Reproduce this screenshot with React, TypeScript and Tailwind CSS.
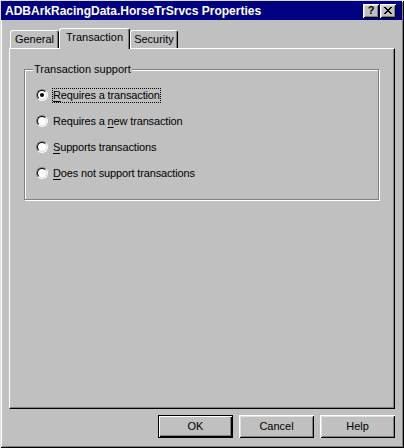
import React from "react";

const raised =
  "shadow-[inset_1px_1px_0_#ffffff,inset_-1px_-1px_0_#000000,inset_2px_2px_0_#dfdfdf,inset_-2px_-2px_0_#808080]";

function Radio({ checked }: { checked?: boolean }) {
  return (
    <div className="w-[12px] h-[12px] rounded-full border border-t-[#808080] border-l-[#808080] border-r-white border-b-white shrink-0">
      <div className="w-full h-full rounded-full border border-t-black border-l-black border-r-[#dfdfdf] border-b-[#dfdfdf] bg-white flex items-center justify-center">
        {checked && <div className="w-[4px] h-[4px] rounded-full bg-black" />}
      </div>
    </div>
  );
}

function Row({
  children,
  checked,
  focused,
}: {
  children: React.ReactNode;
  checked?: boolean;
  focused?: boolean;
}) {
  return (
    <div className="flex items-center h-[16px]">
      <Radio checked={checked} />
      <div
        className={
          "ml-[4px] h-[15px] leading-[13px] tracking-[-0.15px] border border-dotted " +
          (focused ? "border-black" : "border-transparent")
        }
      >
        {children}
      </div>
    </div>
  );
}

function U({ children }: { children: React.ReactNode }) {
  return <span className="underline underline-offset-[2px]">{children}</span>;
}

function Tab({ label, active, w }: { label: string; active?: boolean; w: string }) {
  return (
    <div
      className={
        "relative flex justify-center bg-[#c0c0c0] border-t border-l border-white border-r border-r-black rounded-t-[3px] shadow-[inset_-1px_0_0_#808080] " +
        w +
        (active ? " h-[21px] -mb-[1px] z-10 pt-[2px]" : " h-[18px] pt-[2px]")
      }
    >
      <span className="leading-[13px]">{label}</span>
    </div>
  );
}

function Btn({ label, def }: { label: string; def?: boolean }) {
  return (
    <div
      className={
        "w-[75px] h-[23px] flex items-center justify-center bg-[#c0c0c0] " +
        (def
          ? "border border-black shadow-[inset_1px_1px_0_#ffffff,inset_-1px_-1px_0_#000000,inset_-2px_-2px_0_#808080]"
          : raised)
      }
    >
      {label}
    </div>
  );
}

export default function App() {
  return (
    <div className="w-[404px] h-[448px] bg-[#c0c0c0] flex flex-col font-['Liberation_Sans',Arial,sans-serif] text-[11px] text-black shadow-[inset_1px_1px_0_#dfdfdf,inset_-1px_-1px_0_#000000,inset_2px_2px_0_#ffffff,inset_-2px_-2px_0_#808080] overflow-hidden">
      {/* Title bar */}
      <div className="mt-[1px] ml-[1px] mr-[2px] h-[19px] bg-[#000080] flex items-center pl-[4px] pr-[6px]">
        <span className="text-white font-bold text-[12px] flex-1 leading-none">
          ADBArkRacingData.HorseTrSrvcs Properties
        </span>
        <div className="flex">
          <div className={"w-[16px] h-[14px] bg-[#c0c0c0] flex items-center justify-center font-bold text-[11px] leading-none " + raised}>
            ?
          </div>
          <div className={"w-[16px] h-[14px] bg-[#c0c0c0] flex items-center justify-center ml-[1px] " + raised}>
            <svg width="8" height="7" viewBox="0 0 8 7" shapeRendering="crispEdges">
              <path
                d="M0 0h2v1h-2z M6 0h2v1h-2z M1 1h2v1h-2z M5 1h2v1h-2z M2 2h4v1h-4z M3 3h2v1h-2z M2 4h4v1h-4z M1 5h2v1h-2z M5 5h2v1h-2z M0 6h2v1h-2z M6 6h2v1h-2z"
                fill="#000"
              />
            </svg>
          </div>
        </div>
      </div>

      {/* Tabs */}
      <div className="mt-[8px] ml-[10px] h-[20px] flex items-end">
        <Tab label="General" w="w-[49px]" />
        <Tab label="Transaction" w="w-[71px]" active />
        <Tab label="Security" w="w-[48px]" />
      </div>

      {/* Panel */}
      <div className="ml-[9px] w-[386px] h-[361px] border-t border-l border-white border-r border-b border-r-black border-b-black shadow-[inset_-1px_-1px_0_#808080] flex flex-col">
        <div className="mt-[20px] ml-[14px] w-[355px] h-[131px] border border-[#808080] shadow-[1px_1px_0_#ffffff,inset_1px_1px_0_#ffffff] flex flex-col">
          <div className="self-start -mt-[8px] ml-[8px] px-[1px] h-[14px] leading-[14px] bg-[#c0c0c0]">
            Transaction support
          </div>
          <div className="mt-[11px] ml-[11px] flex flex-col gap-[10px]">
            <Row checked focused>
              <U>R</U>equires a transaction
            </Row>
            <Row>
              Requires a <U>n</U>ew transaction
            </Row>
            <Row>
              <U>S</U>upports transactions
            </Row>
            <Row>
              <U>D</U>oes not support transactions
            </Row>
          </div>
        </div>
      </div>

      {/* Buttons */}
      <div className="ml-[9px] w-[386px] mt-[6px] flex justify-end gap-[6px]">
        <Btn label="OK" def />
        <Btn label="Cancel" />
        <Btn label="Help" />
      </div>
    </div>
  );
}
